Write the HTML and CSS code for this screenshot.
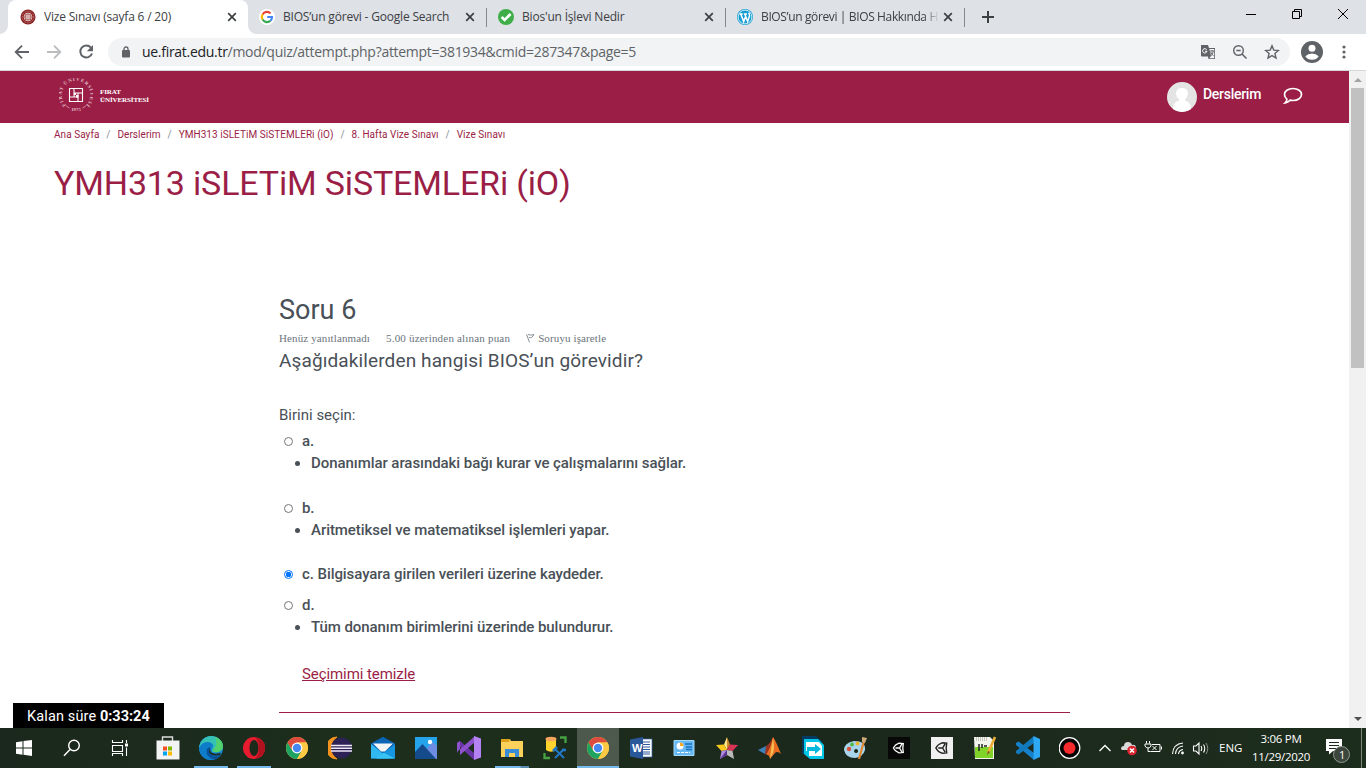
FILE: index.html
```html
<!DOCTYPE html>
<html lang="tr">
<head>
<meta charset="utf-8">
<title>Vize Sınavı (sayfa 6 / 20)</title>
<link rel="stylesheet" href="styles.css">
</head>
<body>
<svg class="defs" aria-hidden="true">
  <symbol id="chrome" viewBox="0 0 24 24">
    <circle cx="12" cy="12" r="11" fill="#fbc943"/>
    <path d="M2.5 6.5A11 11 0 0 1 21.5 6.5H12L7.2 14.7Z" fill="#dc4b3e"/>
    <path d="M2.5 6.5A11 11 0 0 0 12 23L16.8 14.8 7.3 14.8Z" fill="#1ea362"/>
    <path d="M12 6.5h9.5A11 11 0 0 1 12 23l4.8-8.2Z" fill="#fbc943"/>
    <circle cx="12" cy="12" r="5.4" fill="#fff"/><circle cx="12" cy="12" r="4.2" fill="#4688f1"/>
  </symbol>
  <symbol id="close" viewBox="0 0 10 10"><path d="M1.2 1.2l7.6 7.6M8.8 1.2L1.2 8.8" stroke="#3c4043" stroke-width="1.7" fill="none"/></symbol>
  <symbol id="unity" viewBox="0 0 12 12"><path d="M.8 6Q2.500 2.500 6.500 1.200L10.800 1.500 10.300 6 10.800 10.500 6.500 10.800Q2.500 9.500 .8 6Z M3 6H7L9.300 2.200M7 6L9.300 9.800" fill="none" stroke="currentColor" stroke-width="1.300"/></symbol>
</svg>
<div class="tabstrip">
  <div class="tab tab-active">
    <svg class="fav" viewBox="0 0 16 16"><circle cx="8" cy="8" r="7.5" fill="#8d2020"/><circle cx="8" cy="8" r="5.8" fill="none" stroke="#b88" stroke-width="1" stroke-dasharray="1 .8"/><circle cx="8" cy="8" r="4.3" fill="#fff"/><circle cx="8" cy="8" r="3.6" fill="#8d2020"/><path d="M6 6h4v4H6zM8 6v4M6 8h4" fill="none" stroke="#fff" stroke-width=".8"/></svg>
    <span class="tab-title">Vize Sınavı (sayfa 6 / 20)</span><svg class="x"><use href="#close"/></svg>
  </div>
  <div class="tab">
    <svg class="fav" viewBox="0 0 16 16"><circle cx="8" cy="8" r="8" fill="#fff"/><g fill="none" stroke-width="2.1"><path d="M3.6 5.4A5 5 0 0 1 11.6 4.4" stroke="#ea4335"/><path d="M3.6 5.4A5 5 0 0 0 3.6 10.6" stroke="#fbbc05"/><path d="M3.6 10.6A5 5 0 0 0 11.4 11.8" stroke="#34a853"/><path d="M8.2 8h4.8Q13 10.500 11.400 11.800" stroke="#4285f4"/></g></svg>
    <span class="tab-title">BIOS’un görevi - Google Search</span><svg class="x"><use href="#close"/></svg>
  </div>
  <div class="tab tab-sep">
    <svg class="fav" viewBox="0 0 16 16"><circle cx="8" cy="8" r="8" fill="#3fae49"/><path d="M3.6 8l3 3 6-6" fill="none" stroke="#fff" stroke-width="2.6"/></svg>
    <span class="tab-title">Bios'un İşlevi Nedir</span><svg class="x"><use href="#close"/></svg>
  </div>
  <div class="tab tab-sep">
    <svg class="fav" viewBox="0 0 16 16"><circle cx="8" cy="8" r="8" fill="#149cd2"/><circle cx="8" cy="8" r="6.900" fill="none" stroke="#fff" stroke-width=".8"/><path d="M2.500 5h3.200M6.800 5H10M3.700 5l3 7.600L8.400 8M7.800 5l2.800 7.400L12.500 7Q12.600 5 11.700 3.800" fill="none" stroke="#fff" stroke-width="1.500"/></svg>
    <span class="tab-title tab-fade">BIOS’un görevi | BIOS Hakkında H</span><svg class="x"><use href="#close"/></svg>
  </div>
  <div class="newtab"><svg width="14" height="14" viewBox="0 0 14 14"><path d="M7 1v12M1 7h12" stroke="#3c4043" stroke-width="2"/></svg></div>
  <div class="winbtns">
    <svg viewBox="0 0 12 12"><path d="M1 6.500h10" stroke="#000"/></svg>
    <svg viewBox="0 0 12 12"><path d="M1.500 3.500h7v7h-7zM3.500 3.500V1.500h7v7H8.500" fill="none" stroke="#000"/></svg>
    <svg viewBox="0 0 12 12"><path d="M1 1l10 10M11 1L1 11" stroke="#000"/></svg>
  </div>
</div>
<div class="toolbar">
  <svg class="nav" viewBox="0 0 16 16"><path d="M15 8H2M8 1.700L1.700 8 8 14.300" fill="none" stroke="#5f6368" stroke-width="1.800"/></svg>
  <svg class="nav" viewBox="0 0 16 16"><path d="M1 8h13M8 1.700L14.300 8 8 14.300" fill="none" stroke="#babcbe" stroke-width="1.800"/></svg>
  <svg class="nav" viewBox="0 0 16 16"><path d="M12.900 3.600A6 6 0 1 0 14 9.500" fill="none" stroke="#5f6368" stroke-width="2"/><path d="M15 1v6.200H8.800Z" fill="#5f6368"/></svg>
  <div class="omnibox">
    <svg class="lock" viewBox="0 0 10 12"><rect x="1" y="4" width="8" height="7.500" rx="1" fill="#5f6368"/><path d="M3 4.500V3a2 2 0 0 1 4 0v1.500" fill="none" stroke="#5f6368" stroke-width="1.300"/></svg>
    <span class="url"><b>ue.firat.edu.tr</b>/mod/quiz/attempt.php?attempt=381934&amp;cmid=287347&amp;page=5</span>
    <svg class="oi" viewBox="0 0 16 16"><path d="M1 1h7l1 3h6v11H8.500L8 12.500H2a1 1 0 0 1-1-1Z" fill="#5f6368"/><path d="M9.300 5H14.200v9.200H9.400L11 11.500Z" fill="#f1f3f4"/><path d="M6.700 5.700A2.200 2.200 0 1 0 7 7.300H5" fill="none" stroke="#fff"/><path d="M10 7h4M12 6v1M10.300 12.500q2.500-2 3-5.500M10.700 8q1 2.500 2.800 3.800" fill="none" stroke="#5f6368" stroke-width=".9"/></svg>
    <svg class="oi" viewBox="0 0 16 16"><circle cx="6.500" cy="6.500" r="4.800" fill="none" stroke="#5f6368" stroke-width="1.400"/><path d="M4.300 6.500h4.400M10 10l4.500 4.500" stroke="#5f6368" stroke-width="1.500"/></svg>
    <svg class="oi" viewBox="0 0 16 16"><path d="M8 1.900l1.800 4.200 4.600.4-3.500 3 1.100 4.500L8 11.600 4 14l1.100-4.500-3.500-3 4.600-.4Z" fill="none" stroke="#5f6368" stroke-width="1.400"/></svg>
  </div>
  <svg class="profile" viewBox="0 0 22 22"><circle cx="11" cy="11" r="11" fill="#5f6368"/><circle cx="11" cy="7.300" r="3.500" fill="#fff"/><path d="M4.300 15.200Q7 12.500 11 12.500t6.700 2.700Q15.500 18.800 11 18.800T4.300 15.200Z" fill="#fff"/></svg>
  <svg class="dots" viewBox="0 0 4 14"><g fill="#5f6368"><circle cx="2" cy="2" r="1.600"/><circle cx="2" cy="7" r="1.600"/><circle cx="2" cy="12" r="1.600"/></g></svg>
</div>
<div class="viewport">
  <div class="page">
    <header class="site">
      <svg class="seal" viewBox="0 0 34 34">
        <defs><path id="ring" d="M17 31.300A14.300 14.300 0 1 1 17.100 31.300"/></defs>
        <text class="ringtext"><textPath href="#ring" startOffset="11" textLength="67">FIRAT ÜNİVERSİTESİ</textPath></text>
        <text class="year" x="17" y="32.500" text-anchor="middle">1975</text><path d="M6.500 27q1.600 2 4 3M23.500 30q2.400-1 4-3" stroke="#d9a5b5" fill="none" stroke-width=".8"/>
        <path d="M10.500 10.500h13v13h-13zM15 10.500v8.500M10.500 19H19M19 15v8.500M15 15h8.500" fill="none" stroke="#fff" stroke-width="1.100"/><path d="M15 15h2v2h-2zM17 17h2.500v2.500H17z" fill="#fff"/>
      </svg>
      <div class="brand">FIRAT<br>ÜNİVERSİTESİ</div>
      <svg class="avatar" viewBox="0 0 30 30"><circle cx="15" cy="15" r="15" fill="#e4e4e4"/><path d="M6 27c0-5 2.500-7.500 6-8.500v-1.300Q9 15 9 11.500C9 8 11.500 6 15 6s6 2 6 5.500q0 3.500-3 5.700v1.300c3.500 1 6 3.500 6 8.500Q20 30 15 30T6 27Z" fill="#fff"/></svg>
      <span class="me">Derslerim</span>
      <svg class="bubble" viewBox="0 0 20 18"><path d="M10 1.500c5 0 8.500 2.700 8.500 6s-3.500 6-8.500 6q-1.500 0-2.800-.3Q5 15.500 2.200 15.800q1.700-1.600 1.700-3.700Q1.500 10.300 1.500 7.500c0-3.300 3.500-6 8.500-6Z" fill="none" stroke="#fff" stroke-width="1.700"/></svg>
    </header>
    <main>
      <nav class="crumbs"><span>Ana Sayfa</span><i>/</i><span>Derslerim</span><i>/</i><span>YMH313 iSLETiM SiSTEMLERi (iO)</span><i>/</i><span>8. Hafta Vize Sınavı</span><i>/</i><span>Vize Sınavı</span></nav>
      <h1>YMH313 iSLETiM SiSTEMLERi (iO)</h1>
      <section class="question">
        <h2>Soru 6</h2>
        <div class="info"><span>Henüz yanıtlanmadı</span><span class="points">5.00 üzerinden alınan puan</span><span class="flag"><svg viewBox="0 0 9 10"><path d="M2 1.500q2.500 1 6 .2L5.500 4.700M3 4.500q1.500 0 2.500.2M.5 1.300l3 8" fill="none" stroke="#868e96"/></svg><span>Soruyu işaretle</span></span></div>
        <p class="stem">Aşağıdakilerden hangisi BIOS’un görevidir?</p>
        <p class="prompt">Birini seçin:</p>
        <div class="opt"><i class="radio"></i><span>a.</span></div>
        <ul><li>Donanımlar arasındaki bağı kurar ve çalışmalarını sağlar.</li></ul>
        <div class="opt"><i class="radio"></i><span>b.</span></div>
        <ul class="short"><li>Aritmetiksel ve matematiksel işlemleri yapar.</li></ul>
        <div class="opt picked"><i class="radio on"></i><span>c. Bilgisayara girilen verileri üzerine kaydeder.</span></div>
        <div class="opt"><i class="radio"></i><span>d.</span></div>
        <ul><li>Tüm donanım birimlerini üzerinde bulundurur.</li></ul>
        <a class="clear">Seçimimi temizle</a>
      </section>
    </main>
  </div>
  <div class="scroll"><i class="up"></i><div class="thumb"></div><i class="down"></i></div>
  <div class="timer"><span>Kalan süre</span> <b>0:33:24</b></div>
</div>
<footer class="taskbar">
  <div class="sys"><svg viewBox="0 0 24 24"><path d="M4 6.200l6.500-1v6.300H4zM11.500 5L20 4v7.500h-8.500zM4 12.500h6.500v6.300L4 17.800zM11.500 12.500H20V20l-8.500-1.200z" fill="#fff"/></svg></div>
  <div class="sys"><svg viewBox="0 0 24 24"><circle cx="14" cy="9.500" r="5.300" fill="none" stroke="#fff" stroke-width="1.400"/><path d="M10 13.500L4 19.700" stroke="#fff" stroke-width="1.500"/></svg></div>
  <div class="sys"><svg viewBox="0 0 24 24"><path d="M4.500 4v2.500h10V4M4.500 9.500h10v6h-10zM4.500 20v-2.500h10V20M18.500 4v3M18.500 11.500V20" fill="none" stroke="#fff" stroke-width="1.100"/><path d="M17 7.500h3v3h-3z" fill="#fff"/></svg></div>
  <div class="app first"><svg viewBox="0 0 24 24"><path d="M6.500 6V1h10v5" fill="none" stroke="#ddd" stroke-width="1.400"/><path d="M.5 4.500h23v19H.5Z" fill="#f3f3f3"/><path d="M7 10.500h4v4H7z" fill="#f25022"/><path d="M12 10.500h4v4h-4z" fill="#7fba00"/><path d="M7 15.500h4v4H7z" fill="#00a4ef"/><path d="M12 15.500h4v4h-4z" fill="#ffb900"/></svg></div>
  <div class="app open"><svg viewBox="0 0 24 24"><circle cx="12" cy="12" r="12" fill="#168bd2"/><path d="M0 12C1 5 5.500 0 12 0c7 0 12 5 12 10 0 5-4 6.500-8 6.300-3-.1-4-1.500-2.500-3.300Q15 9 10 7 4 5.800 0 12Z" fill="#35c1b4"/><path d="M16 1Q24 4 24 10.500q-.5 5-7 5.800-3-.4-3.300-1.700Q20 8 16 1Z" fill="#52d16c"/><path d="M0 12Q3 5.500 9 6q5 .6 5.500 5-7-2.500-7 3.500.5 7 7 9.300Q2 25 0 12Z" fill="#0d7dca"/><path d="M7.500 14q-.5 8 8 9.500 4-1 6.500-5-8 3-11-1.500-1.500-3 1-6-4 0-4.500 3Z" fill="#08529e"/><path d="M11.500 12q-1 2 .5 4.300Q15 19 22 16.700q-1.500 1.800 0 1.800Q15 21 11 17.500q-2-3 .5-5.500Z" fill="#1c2a1c"/></svg></div>
  <div class="app open"><svg viewBox="0 0 24 24"><path d="M12 1A11 11 0 0 0 12 23Q23 22 23 12T12 1Z" fill="#e81b2f"/><path d="M13 1.500Q23 3 23 12t-10 10.500Q17 20 17 12T13 1.500Z" fill="#b0121e"/><ellipse cx="12" cy="12" rx="4.500" ry="8" fill="#1c2a1c"/></svg></div>
  <div class="app"><svg><use href="#chrome"/></svg></div>
  <div class="app"><svg viewBox="0 0 24 24"><path d="M9 1A11 11 0 0 0 9 23 13 13 0 0 1 9 1Z" fill="#f7941e" stroke="#f7941e"/><circle cx="13.500" cy="12" r="10.500" fill="#2c2255"/><path d="M3 9.500h21M3 12.300h21M3 15h21" stroke="#eee9f7" stroke-width="1.500"/></svg></div>
  <div class="app"><svg viewBox="0 0 24 24"><path d="M0 7.500L12 .8l12 6.700v15H0z" fill="#0b64b4"/><path d="M2 7.500h20l-8 8H10Z" fill="#f3f5f5"/><path d="M0 8l18 14.500H0z" fill="#32b8f0"/><path d="M24 8v14.500H6Z" fill="#1695e0"/><path d="M12.500 16.500L24 22.500H5Z" fill="#39c2f4"/></svg></div>
  <div class="app"><svg viewBox="0 0 24 24"><path d="M1 1h22v22H1z" fill="#26a4eb"/><path d="M13 12l6-6 4 4v13H13z" fill="#6c8de2"/><path d="M1 16l7.500-8L22 23H1z" fill="#164b8b"/><circle cx="16" cy="6" r="2.200" fill="#fff"/></svg></div>
  <div class="app"><svg viewBox="0 0 24 24"><path d="M0 7l3-2L17 17l1 7-2-1L0 8z" fill="#6a35a9"/><path d="M0 17V7L3 5v14zM0 17l3 2L18 6V0L1 15z" fill="#8f52cd"/><path d="M17 0l7 2.500v19L17 24z" fill="#b582f4"/></svg></div>
  <div class="app open grouped"><svg viewBox="0 0 24 24"><path d="M1 3h9l1 2h12v16H1z" fill="#f9d15b"/><path d="M1 3h9l-1 3H1z" fill="#dda01a"/><path d="M5 21v-8h14v8h-4v-4H9v4z" fill="#3b8dd8"/></svg></div>
  <div class="app"><svg viewBox="0 0 24 24"><path d="M3 3v11q5 3.500 10 0V3z" fill="#ffd32e"/><ellipse cx="8" cy="3" rx="5.500" ry="2.300" fill="#f6a55c"/><path d="M17 1.500h5.500V7M1.500 17v5H7" fill="none" stroke="#45a344" stroke-width="2.300"/><path d="M12 22l9-9M12 13l9 9" stroke="#2377c9" stroke-width="2"/><path d="M10 15l4-4M19 14h4" stroke="#2377c9" stroke-width="2.500"/></svg></div>
  <div class="app current"><svg><use href="#chrome"/></svg></div>
  <div class="app"><svg viewBox="0 0 24 24"><path d="M12 3h11v18H12z" fill="#fff" stroke="#3a66ae" stroke-width=".7"/><path d="M14 6h7M14 8.500h7M14 11h7M14 13.500h7M14 16h7M14 18h7" stroke="#2a579a" stroke-width="1"/><path d="M1 3.500L14 1v22L1 20.500z" fill="#2a579a"/><text class="w" x="3" y="15.500">W</text></svg></div>
  <div class="app"><svg viewBox="0 0 24 24"><path d="M2 4.500h20v15H2z" fill="#66b9f2" stroke="#a6dafa"/><circle cx="8" cy="10" r="3.500" fill="#fff"/><path d="M8 10V6.500A3.500 3.500 0 0 1 11.500 10z" fill="#f8a723"/><path d="M13 8h7M14 11h6M14 13.500h6" stroke="#1d72c4" stroke-width="1.300"/><path d="M5 16.500h13" stroke="#fff" stroke-dasharray="3 1"/></svg></div>
  <div class="app"><svg viewBox="0 0 24 24"><path d="M12 1l-3 7.500 3 5.500z" fill="#ffe88b"/><path d="M12 1l3 7.500-3 5.500z" fill="#cc8628"/><path d="M1 9l8-.5 3 5.500-5.500 1z" fill="#fbc91c"/><path d="M23 9l-8-.5-3 5.500 5.500 1z" fill="#d83556"/><path d="M5 23l1.500-8 5.500-1v5z" fill="#ac8ae0"/><path d="M19 23l-1.500-8L12 14v5z" fill="#bbb"/><path d="M12 19l-7 4 7-9z" fill="#593291"/></svg></div>
  <div class="app"><svg viewBox="0 0 24 24"><path d="M0 14l8-4 3 4-4 4z" fill="#3d81bb"/><path d="M8 10q3-1 7-9 2 2 1 8l-5 9-4 0z" fill="#983420"/><path d="M15 1q3 4 8 17-3-3-5.500-1.500L12 23q-1-5-4-4 5-8 7-18Z" fill="#e96d20"/><path d="M15 2q2 9 0 15l-3 6q1-12 3-21Z" fill="#f8bd53"/></svg></div>
  <div class="app"><svg viewBox="0 0 24 24"><path d="M1 0h14l7 6H4v12H1z" fill="#063b61"/><path d="M3 3h14l6 6v14H9l-6-5z" fill="#00c5e8"/><path d="M5 6h13l3 4v10H8v-5H5z" fill="#fff"/><path d="M6 11h8V8l6 5-6 5v-3H6z" fill="#00b9df"/></svg></div>
  <div class="app"><svg viewBox="0 0 24 24"><path d="M10 5Q0 7 0 14q2 8 11 8 8-1 10-8 1-9-11-9Zm2 12a2 2 0 1 1 .1 0Z" fill="#a9d5ec" fill-rule="evenodd"/><circle cx="5" cy="13" r="2.200" fill="#d8533e"/><circle cx="8" cy="8.500" r="2" fill="#51b849"/><circle cx="13.500" cy="7.500" r="2" fill="#f1b22e"/><path d="M15 23l5-18" stroke="#e08833" stroke-width="2.200"/><path d="M18 1l5 1-2 5-3-1z" fill="#ceaa76"/></svg></div>
  <div class="app"><svg class="unity" viewBox="0 0 24 24"><path d="M1 1h22v22H1z" fill="#080808"/><use href="#unity" x="5.500" y="6" width="12" height="12"/></svg></div>
  <div class="app"><svg class="unity inv" viewBox="0 0 24 24"><path d="M1 1h22v22H1z" fill="#f0f0f0"/><use href="#unity" x="5" y="5.500" width="13" height="13"/></svg></div>
  <div class="app"><svg viewBox="0 0 24 24"><path d="M1 1h16l4 4v18H2z" fill="#f3f5ed"/><path d="M2 11h18v11H2z" fill="#80d427"/><path d="M3 2h12M3 4h12" stroke="#999" stroke-dasharray="1 1"/><path d="M6 8v7M9 8v4M11 10h3" stroke="#222" stroke-width="1.500"/><path d="M15 17l7-16" stroke="#edaf38" stroke-width="2.600"/><path d="M14 19l1-4 2 1z" fill="#754c24"/></svg></div>
  <div class="app"><svg viewBox="0 0 24 24"><path d="M0 7l2.500-1.500L18 17v7L0 9z" fill="#1681ca"/><path d="M0 17l2.500 1.500L18 7V0L0 15z" fill="#1379bd"/><path d="M17.500 0L24 3v18l-6.500 3z" fill="#2ea8f2"/></svg></div>
  <div class="app"><svg viewBox="0 0 24 24"><circle cx="10.500" cy="12" r="10.300" fill="#050505" stroke="#fff" stroke-width="1.200"/><circle cx="10.500" cy="12" r="6" fill="#f52a2d"/></svg></div>
  <div class="tray">
    <svg class="t1" viewBox="0 0 14 10"><path d="M1.500 8L7 2.500 12.500 8" fill="none" stroke="#fff" stroke-width="1.300"/></svg>
    <svg class="t2" viewBox="0 0 18 16"><path d="M1 9q0-3 3-3 0-4 4-4 3 0 4 3 3-1 4 2l-2 3H2Z" fill="#d9d9d9"/><circle cx="12" cy="10.500" r="4.800" fill="#d9232e"/><path d="M10 8.500l4 4M14 8.500l-4 4" stroke="#fff" stroke-width="1.500"/></svg>
    <svg class="t3" viewBox="0 0 18 16"><path d="M2.500 1v2.500M5.500 1v2.500M1 4h6v2q-1 2-3 2T1 6ZM4 8v3.500h2.500M8 4.500h8v7H6.500M17.500 6.500v3M8.500 6l4 4M12.500 6l-4 4" fill="none" stroke="#fff"/></svg>
    <svg class="t4" viewBox="0 0 14 14"><path d="M1.500 13Q2 3 12 2M4.500 13Q5 6 12 5M7.500 13Q8 9 12 8.500" fill="none" stroke="#fff" stroke-width="1.100"/><circle cx="11.500" cy="12" r="1.400" fill="#fff"/></svg>
    <svg class="t5" viewBox="0 0 18 14"><path d="M1.500 5h2.500L7 2v11L4 10H1.500zM9 5q1.500 2.500 0 5M11.500 3.500q2.500 4 0 8" fill="none" stroke="#fff" stroke-width="1.100"/><path d="M14 2q3.500 5.500 0 11" fill="none" stroke="#899289"/></svg>
    <span class="lang">ENG</span>
    <div class="clock"><span>3:06 PM</span><span>11/29/2020</span></div>
    <svg class="t6" viewBox="0 0 26 26"><path d="M1 1h16v12H8l-4 3.500V13H1z" fill="#fff"/><path d="M4 4.500h10M4 7.500h10M4 10.500h8" stroke="#1c2a1c"/><circle cx="16.500" cy="16.500" r="8" fill="#3d463d" stroke="#929a92"/><text x="14" y="21">1</text></svg>
    <i class="peek"></i>
  </div>
</footer>
</body>
</html>
```
FILE: styles.css
```css
* { box-sizing: border-box; }
html, body { margin: 0; height: 100%; overflow: hidden; }
body { display: flex; flex-direction: column; width: 1366px; height: 768px; background: #fff; font-family: Roboto, sans-serif; color: #495057; }
svg { display: block; flex: none; }
i { font-style: normal; }
.defs { width: 0; height: 0; position: absolute; }

.tabstrip { flex: none; height: 34px; background: radial-gradient(circle at 0 0, transparent 7.5px, #fff 8px) 0 26px / 8px 8px no-repeat, radial-gradient(circle at 100% 0, transparent 7.5px, #fff 8px) 248px 26px / 8px 8px no-repeat, #dee1e6; display: flex; padding-left: 8px; font: 12px/34px "Open Sans", "Noto Sans", sans-serif; letter-spacing: -.19px; color: #3c4043; }
.tab { width: 239px; height: 34px; display: flex; align-items: center; padding: 0 11px 0 12px; }
.tab-active { width: 240px; margin-right: -1px; background: #fff; border-radius: 8px 8px 0 0; padding-right: 11px; }
.tab-sep { background: linear-gradient(#85888d, #85888d) 0 8px / 1px 19px no-repeat; }
.fav { width: 16px; height: 16px; margin-right: 8px; }
.tab-title { flex: 1; white-space: nowrap; overflow: hidden; }
.tab-fade { letter-spacing: -.37px; -webkit-mask: linear-gradient(90deg, #000 163px, transparent 178px); mask: linear-gradient(90deg, #000 163px, transparent 178px); }
.x { width: 10px; height: 10px; }
.newtab { width: 46px; display: flex; align-items: center; justify-content: center; border-left: 1px solid #85888d; height: 19px; margin: 8px 0 0; padding-bottom: 1px; }
.winbtns { margin-left: auto; display: flex; gap: 34px; padding: 8px 17px 0 0; }
.winbtns svg { width: 12px; height: 12px; }

.toolbar { flex: none; height: 37px; border-bottom: 1px solid #d5d7da; display: flex; align-items: center; padding-left: 14px; gap: 16px; }
.nav { width: 16px; height: 16px; }
.omnibox { width: 1182px; height: 28px; border-radius: 14px; background: #f1f3f4; display: flex; align-items: center; gap: 16px; padding: 0 10px 0 13px; margin-left: -2px; }
.lock { width: 10px; height: 14px; }
.url { flex: 1; font: 14px/28px "Open Sans", sans-serif; letter-spacing: -.29px; color: #5f6368; white-space: nowrap; margin-left: -5px; }
.url b { font-weight: 400; color: #202124; }
.oi { width: 16px; height: 16px; }
.profile { width: 22px; height: 22px; margin-left: -5px; }
.dots { width: 4px; height: 14px; margin-left: 3px; }

.viewport { flex: 1; min-height: 0; display: flex; position: relative; }
.page { width: 1349px; overflow: hidden; }
.site { height: 52px; background: #9a1e46; display: flex; align-items: center; padding-left: 59px; color: #fff; }
.seal { width: 34px; height: 34px; margin-top: -4px; }
.ringtext, .year { font: bold 4.8px "Liberation Serif", serif; fill: #e5c0cb; }
.brand { margin-left: 7px; margin-top: -2px; font: bold 7px/8px "Liberation Serif", serif; letter-spacing: -.1px; width: 60px; white-space: nowrap; }
.avatar { width: 30px; height: 30px; margin-left: auto; }
.me { font-size: 14px; font-weight: 500; letter-spacing: -.28px; margin: -6px 0 0 6px; width: 80px; }
.bubble { width: 20px; height: 18px; margin: -2px 46px 0 0; }
main { padding-left: 54px; }
.crumbs { height: 23px; display: flex; font-size: 10px; line-height: 23px; letter-spacing: .05px; color: #9a1e46; }
.crumbs i { width: 18px; text-align: center; color: #868e96; }
h1 { margin: 15px 0 0; font-size: 34px; line-height: 44px; font-weight: 400; letter-spacing: -.16px; color: #9a1e46; white-space: nowrap; }
.question { margin: 84px 0 0 225px; width: 791px; height: 424px; border-bottom: 1px solid #9a1e46; white-space: nowrap; padding-top: 1px; }
h2 { margin: 0; font-size: 27px; line-height: 40px; font-weight: 400; }
.info { display: flex; gap: 16px; font: 11px/16px "Liberation Serif", serif; letter-spacing: .12px; color: #6b747c; }
.points { letter-spacing: .19px; }
.flag { display: flex; align-items: center; gap: 3px; }
.flag svg { width: 9px; height: 10px; }
p { margin: 0; }
.stem { font-size: 19px; line-height: 30px; letter-spacing: .12px; }
.prompt { font-size: 15px; line-height: 22px; margin-top: 28px; }
.opt { display: flex; align-items: center; padding-left: 5px; height: 22px; margin-top: 4px; font-size: 15px; line-height: 22px; font-weight: 500; letter-spacing: -.07px; }
.radio { width: 9px; height: 9px; border: 1px solid #767676; border-radius: 50%; margin-right: 9px; }
.radio.on { border-color: #0075ff; background: radial-gradient(circle, #0075ff 2.6px, #fff 3px); }
ul { margin: 0 0 23px; padding-left: 32px; font-size: 15px; line-height: 22px; font-weight: 500; letter-spacing: -.06px; }
.short { margin-bottom: 22px; }
.short + .opt { margin-top: 0; }
.picked { margin-bottom: 9px; }
.picked + .opt { margin-top: 0; }
.clear { display: block; margin: 25px 0 0 23px; font-size: 15px; line-height: 22px; letter-spacing: -.08px; color: #9a1e46; text-decoration: underline; }
.scroll { width: 17px; background: #f1f1f1; display: flex; flex-direction: column; align-items: center; }
.scroll i { border: 4px solid transparent; width: 0; height: 0; }
.scroll .up { border-top: 0; border-bottom-color: #a3a3a3; margin: 7px 0 6px; }
.scroll .down { border-bottom: 0; border-top-color: #505050; margin: auto 0 7px; }
.thumb { width: 13px; height: 280px; background: #c1c1c1; }
.timer { position: absolute; left: 13px; bottom: 0; width: 151px; height: 25px; background: #000; color: #fff; font-size: 14.5px; line-height: 27px; padding-left: 14px; white-space: nowrap; }
.timer span { letter-spacing: .14px; }
.timer b { font-weight: 700; }

.taskbar { flex: none; height: 40px; background: linear-gradient(90deg, #1b281d, #1d2f1c 30%, #1b281c 60%, #1d2d1d); display: flex; color: #fff; }
.sys { width: 48px; display: flex; align-items: center; justify-content: center; }
.sys svg, .app svg { width: 24px; height: 24px; }
.app { width: 43px; display: flex; align-items: center; justify-content: center; }
.first { margin-left: 2px; }
.open { background: linear-gradient(#76b9ed, #76b9ed) 5px 38px / 34px 2px no-repeat; }
.grouped { background: linear-gradient(90deg, #76b9ed 25px, #5b8bb0 26px) 5px 38px / 34px 2px no-repeat; }
.current { width: 42px; margin-left: 1px; background: linear-gradient(#76b9ed, #76b9ed) 0 38px / 42px 2px no-repeat #4d594c; }
.w { font: bold 11px "Liberation Sans", sans-serif; fill: #fff; }
.unity { color: #fff; }
.inv { color: #222; }
.tray { flex: 1; display: flex; align-items: center; font: 11.5px/18px "Open Sans", sans-serif; padding-left: 6px; white-space: nowrap; }
.t1 { width: 14px; height: 10px; }
.t2 { width: 18px; height: 16px; margin-left: 8px; }
.t3 { width: 18px; height: 16px; margin-left: 6px; }
.t4 { width: 14px; height: 14px; margin-left: 9px; }
.t5 { width: 18px; height: 14px; margin-left: 7px; }
.lang { margin-left: 9px; width: 33px; }
.clock { width: 58px; display: flex; flex-direction: column; align-items: center; letter-spacing: -.28px; }
.t6 { width: 26px; height: 26px; margin-left: 15px; margin-top: 5px; }
.t6 text { font: 11px "Open Sans", sans-serif; fill: #fff; }
.peek { width: 1px; height: 40px; background: #7d857d; margin: 0 4px 0 auto; }
```
